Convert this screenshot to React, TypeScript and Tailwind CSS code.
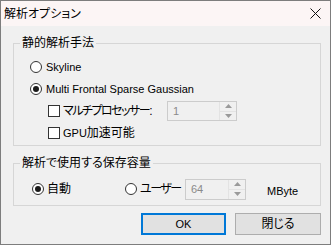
import React from "react";

const Radio = ({ checked }: { checked?: boolean }) => (
  <span className="w-[12px] h-[12px] rounded-full border border-[#333333] bg-white flex items-center justify-center shrink-0">
    {checked && <span className="w-[6px] h-[6px] rounded-full bg-[#1a1a1a]" />}
  </span>
);

const Check = () => (
  <span className="w-[12px] h-[12px] border border-[#333333] bg-white shrink-0" />
);

const Spin = ({ value, w, h }: { value: string; w: string; h: string }) => (
  <div className={`${w} ${h} border border-[#cccccc] bg-[#f0f0f0] flex shrink-0`}>
    <span className="flex-1 pl-[5px] text-[11px] text-[#8a8a8a] flex items-center">{value}</span>
    <div className="w-[17px] flex flex-col border-l border-[#e3e3e3]">
      <div className="flex-1 flex items-center justify-center border-b border-[#e3e3e3]">
        <svg width="7" height="4" viewBox="0 0 7 4">
          <path d="M0 4 L3.5 0 L7 4 Z" fill="#9a9a9a" />
        </svg>
      </div>
      <div className="flex-1 flex items-center justify-center">
        <svg width="7" height="4" viewBox="0 0 7 4">
          <path d="M0 0 L3.5 4 L7 0 Z" fill="#9a9a9a" />
        </svg>
      </div>
    </div>
  </div>
);

export default function App() {
  return (
    <div className="w-[331px] h-[245px] border border-[#7d7d7d] bg-[#f0f0f0] flex flex-col text-[12px] leading-[16px] text-black font-['Liberation_Sans','Noto_Sans_CJK_JP',sans-serif] [font-feature-settings:'palt']">
      {/* title bar */}
      <div className="h-[25px] bg-[#fcf5f5] flex items-center justify-between pl-[3px] pr-[9px]">
        <span>解析オプション</span>
        <svg width="11" height="11" viewBox="0 0 11 11">
          <path d="M0.5 0.5 L10.5 10.5 M10.5 0.5 L0.5 10.5" stroke="#111" strokeWidth="1" />
        </svg>
      </div>

      <fieldset className="ml-[12px] mt-[9px] w-[308px] border border-[#d6d6d6]">
        <legend className="ml-[6px] px-[2px]">静的解析手法</legend>
        <div className="pl-[16px] pt-[5px] pb-[1px]">
          <div className="h-[22px] flex items-center gap-[4px]">
            <Radio />
            <span className="text-[11px]">Skyline</span>
          </div>
          <div className="h-[22px] flex items-center gap-[4px]">
            <Radio checked />
            <span className="text-[11px]">Multi Frontal Sparse Gaussian</span>
          </div>
          <div className="h-[22px] flex items-center pl-[18px]">
            <div className="w-[119px] flex items-center gap-[3px] whitespace-nowrap">
              <Check />
              <span className="tracking-[-1.5px]">マルチプロセッサー:</span>
            </div>
            <Spin value="1" w="w-[70px]" h="h-[20px]" />
          </div>
          <div className="h-[22px] flex items-center gap-[3px] pl-[18px]">
            <Check />
            <span>
              <span className="text-[11px]">GPU</span>加速可能
            </span>
          </div>
        </div>
      </fieldset>

      <fieldset className="ml-[12px] mt-[9px] w-[308px] border border-[#d6d6d6]">
        <legend className="ml-[6px] px-[2px]">解析で使用する保存容量</legend>
        <div className="pl-[18px] pt-[7px] pb-[5px] h-[34px] flex items-center">
          <div className="w-[93px] flex items-center gap-[3px]">
            <Radio checked />
            <span>自動</span>
          </div>
          <div className="w-[60px] flex items-center gap-[3px] whitespace-nowrap">
            <Radio />
            <span className="tracking-[-1.5px]">ユーザー</span>
          </div>
          <Spin value="64" w="w-[61px]" h="h-[21px]" />
          <span className="ml-[21px] pt-[3px] text-[11px]">MByte</span>
        </div>
      </fieldset>

      <div className="ml-[12px] mt-[7px] w-[308px] flex justify-end gap-[9px]">
        <button className="w-[85px] h-[22px] bg-[#e1e1e1] border-2 border-[#0078d7] flex items-center justify-center text-[11px]">
          OK
        </button>
        <button className="w-[86px] h-[22px] bg-[#e1e1e1] border border-[#adadad] flex items-center justify-center">
          閉じる
        </button>
      </div>
    </div>
  );
}
